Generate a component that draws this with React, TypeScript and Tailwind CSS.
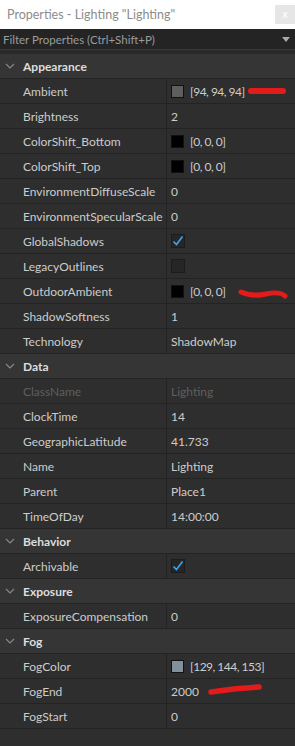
import React from 'react';

type Prop = {
  label: string;
  value?: string;
  swatch?: string;
  check?: boolean;
  dim?: boolean;
};

type Section = { title: string; props: Prop[] };

const sections: Section[] = [
  {
    title: 'Appearance',
    props: [
      { label: 'Ambient', value: '[94, 94, 94]', swatch: '#5e5e5e' },
      { label: 'Brightness', value: '2' },
      { label: 'ColorShift_Bottom', value: '[0, 0, 0]', swatch: '#000000' },
      { label: 'ColorShift_Top', value: '[0, 0, 0]', swatch: '#000000' },
      { label: 'EnvironmentDiffuseScale', value: '0' },
      { label: 'EnvironmentSpecularScale', value: '0' },
      { label: 'GlobalShadows', check: true },
      { label: 'LegacyOutlines', check: false },
      { label: 'OutdoorAmbient', value: '[0, 0, 0]', swatch: '#000000' },
      { label: 'ShadowSoftness', value: '1' },
      { label: 'Technology', value: 'ShadowMap' },
    ],
  },
  {
    title: 'Data',
    props: [
      { label: 'ClassName', value: 'Lighting', dim: true },
      { label: 'ClockTime', value: '14' },
      { label: 'GeographicLatitude', value: '41.733' },
      { label: 'Name', value: 'Lighting' },
      { label: 'Parent', value: 'Place1' },
      { label: 'TimeOfDay', value: '14:00:00' },
    ],
  },
  {
    title: 'Behavior',
    props: [{ label: 'Archivable', check: true }],
  },
  {
    title: 'Exposure',
    props: [{ label: 'ExposureCompensation', value: '0' }],
  },
  {
    title: 'Fog',
    props: [
      { label: 'FogColor', value: '[129, 144, 153]', swatch: '#81909a' },
      { label: 'FogEnd', value: '2000' },
      { label: 'FogStart', value: '0' },
    ],
  },
];

const Chevron = () => (
  <svg width="10" height="6" viewBox="0 0 10 6" className="ml-[5px] mr-[8px]">
    <path d="M1 1 L5 5 L9 1" fill="none" stroke="#8a8a8a" strokeWidth="1.1" />
  </svg>
);

const CheckBox = ({ on }: { on: boolean }) => (
  <div className="w-[14px] h-[14px] bg-[#262626] border border-[#1c1c1c] flex items-center justify-center">
    {on && (
      <svg width="12" height="12" viewBox="0 0 12 12">
        <path d="M1.5 6.5 L4.5 9.5 L10.5 1.5" fill="none" stroke="#3aa6f5" strokeWidth="1.6" />
      </svg>
    )}
  </div>
);

const PropRow = ({ p }: { p: Prop }) => (
  <div className="flex h-[25px] border-b border-[#232323]">
    <div
      className={`w-[167px] shrink-0 pl-[23px] pt-[2px] flex items-center border-r border-[#232323] whitespace-nowrap ${
        p.dim ? 'text-[#5f5f5f]' : 'text-[#cccccc]'
      }`}
    >
      {p.label}
    </div>
    <div className={`flex-1 pl-[4px] flex items-center ${p.dim ? 'text-[#5f5f5f]' : 'text-[#cccccc]'}`}>
      {p.check !== undefined ? (
        <CheckBox on={p.check} />
      ) : (
        <>
          {p.swatch && (
            <div className="w-[13px] h-[13px] border border-[#111] mr-[6px]" style={{ backgroundColor: p.swatch }} />
          )}
          <span className={`pt-[2px] ${p.swatch ? 'tracking-[-0.5px]' : ''}`}>{p.value}</span>
        </>
      )}
    </div>
  </div>
);

const App: React.FC = () => {
  return (
    <div className="relative w-[295px] h-[746px] bg-[#2e2e2e] overflow-hidden font-['Lato','Open_Sans',sans-serif] text-[12px]">
      {/* title bar */}
      <div className="h-[29px] bg-white flex items-center justify-between">
        <span className="pl-[7px] pt-[2px] text-[12.5px] text-[#8c8c8c]">Properties - Lighting "Lighting"</span>
        <div className="w-[20px] h-[19px] bg-[#e6e6e6] flex items-center justify-center text-white text-[11px]">
          x
        </div>
      </div>

      {/* filter */}
      <div className="h-[21px] bg-[#242424] border-b border-[#3a3a3a] flex items-center justify-between">
        <span className="pl-[3px] pt-[1px] text-[11.5px] text-[#9b9b9b]">Filter Properties (Ctrl+Shift+P)</span>
        <svg width="8" height="5" viewBox="0 0 8 5" className="mr-[5px]">
          <path d="M0 0 H8 L4 5 Z" fill="#aaaaaa" />
        </svg>
      </div>
      <div className="h-[4px] bg-[#2a2a2a]" />

      {sections.map((s) => (
        <div key={s.title}>
          <div className="h-[25px] bg-[#353535] border-b border-[#232323] flex items-center">
            <Chevron />
            <span className="pt-[2px] font-bold text-[#dddddd]">{s.title}</span>
          </div>
          {s.props.map((p) => (
            <PropRow key={p.label} p={p} />
          ))}
        </div>
      ))}

      {/* red marker scribbles */}
      <svg className="absolute inset-0 pointer-events-none" width="295" height="746">
        <path d="M251 91 L283 91" stroke="#e31b1b" strokeWidth="6" strokeLinecap="round" fill="none" />
        <path d="M241 292 Q252 297 266 294 T285 296" stroke="#e31b1b" strokeWidth="5" strokeLinecap="round" fill="none" />
        <path d="M211 692 Q235 688 259 687" stroke="#e31b1b" strokeWidth="5.5" strokeLinecap="round" fill="none" />
      </svg>
    </div>
  );
};

export default App;
